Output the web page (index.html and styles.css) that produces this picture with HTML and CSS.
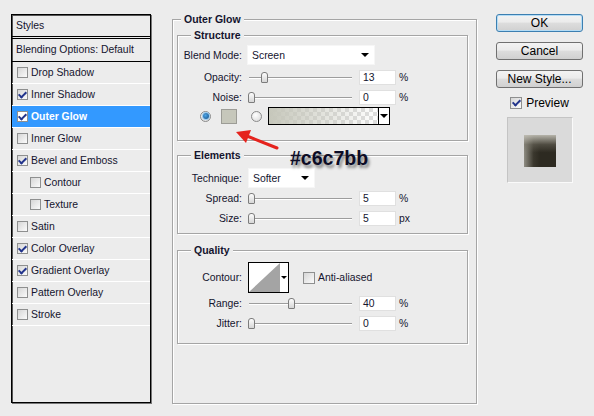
FILE: index.html
```html
<!DOCTYPE html>
<html lang="en">
  <head>
    <meta charset="UTF-8">
    <title>Layer Style - Outer Glow</title>
    <link rel="stylesheet" href="styles.css">
  </head>
  <body>
    <div class="dialog">
      <div class="styles-list">
        <div class="list-head">Styles</div>
        <div class="list-blend">Blending Options: Default</div>
        <div class="item"><span class="cb"></span>Drop Shadow</div>
        <div class="item"><span class="cb on"></span>Inner Shadow</div>
        <div class="item selected"><span class="cb on"></span>Outer Glow</div>
        <div class="item"><span class="cb"></span>Inner Glow</div>
        <div class="item"><span class="cb on"></span>Bevel and Emboss</div>
        <div class="item sub"><span class="cb"></span>Contour</div>
        <div class="item sub"><span class="cb"></span>Texture</div>
        <div class="item"><span class="cb"></span>Satin</div>
        <div class="item"><span class="cb on"></span>Color Overlay</div>
        <div class="item"><span class="cb on"></span>Gradient Overlay</div>
        <div class="item"><span class="cb"></span>Pattern Overlay</div>
        <div class="item"><span class="cb"></span>Stroke</div>
      </div>

      <div class="group outer">
        <div class="group-title">Outer Glow</div>

        <div class="group structure">
          <div class="group-title">Structure</div>
          <div class="row first"><label>Blend Mode:</label><div class="select blend-select">Screen<span class="tri"></span></div></div>
          <div class="row"><label>Opacity:</label><div class="slider"><span class="thumb" style="left:13px"></span></div><span class="num">13</span><span class="unit">%</span></div>
          <div class="row"><label>Noise:</label><div class="slider"><span class="thumb" style="left:0px"></span></div><span class="num">0</span><span class="unit">%</span></div>
          <div class="row color-row">
            <span class="radio on"></span>
            <span class="color-swatch"></span>
            <span class="radio second"></span>
            <div class="grad"><span class="grad-fill"></span><span class="grad-drop"><span class="tri"></span></span></div>
          </div>
        </div>

        <div class="group elements">
          <div class="group-title">Elements</div>
          <div class="row first"><label>Technique:</label><div class="select tech-select">Softer<span class="tri"></span></div></div>
          <div class="row"><label>Spread:</label><div class="slider"><span class="thumb" style="left:0px"></span></div><span class="num">5</span><span class="unit">%</span></div>
          <div class="row"><label>Size:</label><div class="slider"><span class="thumb" style="left:0px"></span></div><span class="num">5</span><span class="unit">px</span></div>
        </div>

        <div class="group quality">
          <div class="group-title">Quality</div>
          <div class="row first contour-row">
            <label>Contour:</label>
            <div class="contour">
              <svg width="31" height="29" viewBox="0 0 31 29"><polygon points="0,29 31,0 31,29" fill="#a4a4a4"/></svg>
              <span class="contour-drop"><span class="tri"></span></span>
            </div>
            <span class="cb aa"></span>Anti-aliased
          </div>
          <div class="row"><label>Range:</label><div class="slider"><span class="thumb" style="left:40px"></span></div><span class="num">40</span><span class="unit">%</span></div>
          <div class="row"><label>Jitter:</label><div class="slider"><span class="thumb" style="left:0px"></span></div><span class="num">0</span><span class="unit">%</span></div>
        </div>
      </div>

      <div class="actions">
        <div class="btn default">OK</div>
        <div class="btn">Cancel</div>
        <div class="btn">New Style...</div>
        <div class="preview-toggle"><span class="cb on"></span>Preview</div>
        <div class="preview-box"><div class="preview-thumb"></div></div>
      </div>
    </div>

    <!-- annotation drawn over the dialog -->
    <svg class="arrow" width="55" height="30" viewBox="0 0 55 30">
      <line x1="47" y1="23" x2="17" y2="11" stroke="#e5231d" stroke-width="3" stroke-linecap="round"/>
      <polygon points="6,7 21,5 16,18" fill="#e5231d"/>
    </svg>
    <div class="note">#c6c7bb</div>
  </body>
</html>
```

FILE: styles.css
```css
* {
  box-sizing: border-box;
}

body {
  margin: 0;
  width: 594px;
  height: 416px;
  overflow: hidden;
  position: relative;
  background: #ececec;
  font-family: 'Liberation Sans', Arial, sans-serif;
  font-size: 10.4px;
  color: #14142e;
}

.dialog {
  display: flex;
  align-items: flex-start;
  padding-left: 11px;
}

/* left style list */
.styles-list {
  width: 140px;
  height: 389px;
  margin-top: 14px;
  border: 1px solid #000;
  box-shadow: inset 1px 1px 0 #555, 1px 1px 0 #777;
  flex: none;
}

.list-head {
  height: 22px;
  line-height: 21px;
  padding-left: 4px;
  border-bottom: 1px solid #000;
  margin-bottom: 1px;
}

.list-blend {
  height: 24px;
  line-height: 22px;
  padding-left: 4px;
  border-top: 1px solid #000;
  border-bottom: 1px solid #000;
}

.item {
  display: flex;
  align-items: center;
  height: 22px;
  padding-left: 5px;
  border-bottom: 1px solid #fff;
}

.item.sub {
  padding-left: 18px;
}

.item.selected {
  background: #3399ff;
  color: #fff;
  font-weight: bold;
}

.cb {
  width: 11px;
  height: 11px;
  flex: none;
  margin-right: 3px;
  border: 1px solid #8e8f8f;
  background: linear-gradient(135deg, #d6d6d6, #fbfbfb);
  display: flex;
  align-items: center;
  justify-content: center;
}

.selected .cb {
  background: #fff;
}

.cb.on::after {
  content: "";
  width: 3px;
  height: 6px;
  border: solid #22348c;
  border-width: 0 2px 2px 0;
  transform: translateY(-1px) rotate(45deg);
}

/* etched groups */
.group {
  border: 1px solid #a5a5a5;
  box-shadow: inset 1px 1px 0 #fff, 1px 1px 0 #fff;
}

.group-title {
  width: fit-content;
  font-weight: bold;
  font-size: 10.5px;
  line-height: 14px;
  padding: 0 3px;
  margin: -8px 0 0 8px;
  background: #ececec;
}

.outer {
  width: 305px;
  height: 385px;
  margin: 19px 0 0 21px;
  flex: none;
}

.outer .group .group-title {
  margin-left: 13px;
}

.structure {
  height: 106px;
  margin: 9px 8px 0 4px;
}

.elements {
  height: 79px;
  margin: 14px 8px 0 4px;
}

.quality {
  height: 94px;
  margin: 16px 8px 0 4px;
}

.row {
  display: flex;
  align-items: center;
  height: 20px;
}

.row label {
  width: 64px;
  flex: none;
  text-align: right;
  margin-right: 5px;
}

.structure .row.first {
  margin-top: 3px;
}

.structure .row + .row {
  margin-top: 2px;
}

.structure .row + .row + .row {
  margin-top: 0;
}

.elements .row.first {
  margin-top: 6px;
}

.quality .row.first {
  margin-top: 5px;
}

.select {
  display: flex;
  align-items: center;
  justify-content: space-between;
  height: 20px;
  padding: 0 5px 0 4px;
  background: #fff;
  border: 1px solid #f6f6f6;
}

.blend-select {
  width: 128px;
}

.tech-select {
  width: 67px;
  margin-left: 1px;
}

.tri {
  width: 0;
  height: 0;
  border-left: 4px solid transparent;
  border-right: 4px solid transparent;
  border-top: 4px solid #000;
}

.slider {
  position: relative;
  width: 104px;
  height: 20px;
  margin-left: 1px;
  flex: none;
}

.slider::before {
  content: "";
  position: absolute;
  left: 1px;
  right: 0;
  top: 10px;
  height: 1px;
  background: #9d9d9d;
  box-shadow: 0 1px 0 #fff;
}

.thumb {
  position: absolute;
  top: 5px;
  width: 7px;
  height: 11px;
  border: 1px solid #7c7c7c;
  border-radius: 3px 3px 1px 1px;
  background: linear-gradient(#fdfdfd, #d6d6d6);
}

.num {
  width: 37px;
  height: 15px;
  margin-left: 7px;
  padding-left: 3px;
  line-height: 13px;
  background: #fff;
  border: 1px solid #e0e0e0;
}

.unit {
  margin-left: 3px;
}

/* colour row */
.row.color-row {
  height: 18px;
  margin-top: 6px;
  padding-left: 22px;
}

.radio {
  width: 11px;
  height: 11px;
  flex: none;
  border-radius: 50%;
  border: 1px solid #8a8a8a;
  background: radial-gradient(circle at 40% 35%, #fff, #d6d6d6);
  display: flex;
  align-items: center;
  justify-content: center;
}

.radio.on::after {
  content: "";
  width: 6px;
  height: 6px;
  border-radius: 50%;
  background: radial-gradient(circle at 40% 40%, #4fa6e6, #0b4b88);
  box-shadow: 0 0 0 1px #9ccbee;
}

.radio.second {
  margin-left: 14px;
}

.color-swatch {
  width: 16px;
  height: 15px;
  margin-left: 10px;
  background: #c6c7bb;
  border: 1px solid #9c9c96;
}

.grad {
  display: flex;
  width: 122px;
  height: 18px;
  margin-left: 6px;
  border: 1px solid #000;
}

.grad-fill {
  flex: 1;
  background:
    linear-gradient(to right, #c6c7bb, rgba(198, 199, 187, 0)),
    conic-gradient(#dedede 25%, #fff 0 50%, #dedede 0 75%, #fff 0) 0 0 / 8px 8px;
}

.grad-drop {
  width: 11px;
  display: flex;
  align-items: center;
  justify-content: center;
  background: #fff;
  border-left: 1px solid #000;
}

/* contour row */
.row.contour-row {
  height: 31px;
}

.contour {
  display: flex;
  width: 41px;
  height: 31px;
  margin-left: 1px;
  border: 1px solid #000;
  background: #fff;
}

.contour svg {
  display: block;
}

.contour-drop {
  flex: 1;
  display: flex;
  align-items: center;
  justify-content: center;
}

.contour-drop .tri {
  border-left-width: 3px;
  border-right-width: 3px;
  border-top-width: 3px;
}

.cb.aa {
  width: 12px;
  height: 12px;
  margin-left: 14px;
}

/* right column */
.actions {
  width: 87px;
  margin: 14px 0 0 19px;
  display: flex;
  flex-direction: column;
  align-items: center;
  flex: none;
}

.btn {
  width: 87px;
  height: 18px;
  margin-bottom: 10px;
  border: 1px solid #707070;
  border-radius: 3px;
  background: linear-gradient(#f3f3f3 0%, #ebebeb 45%, #dddddd 50%, #d0d0d0 100%);
  font-size: 12px;
  line-height: 16px;
  text-align: center;
  color: #000;
}

.btn.default {
  border-color: #3c7fb1;
  box-shadow: inset 0 0 0 1px #b4dcf5;
}

.btn:nth-child(3) {
  margin-bottom: 8px;
}

.preview-toggle {
  display: flex;
  align-items: center;
  height: 13px;
  font-size: 12px;
  color: #000;
}

.preview-toggle .cb {
  width: 12px;
  height: 12px;
  margin-right: 4px;
}

.preview-box {
  width: 66px;
  height: 66px;
  margin-top: 8px;
  display: flex;
  align-items: center;
  justify-content: center;
  background: #dadada;
  border: 1px solid #c4c4c4;
  border-right-color: #fafafa;
  border-bottom-color: #fafafa;
}

.preview-thumb {
  width: 32px;
  height: 32px;
  margin-top: 2px;
  background:
    linear-gradient(to bottom, rgba(196, 194, 184, 0.9) 0%, rgba(120, 116, 104, 0.45) 30%, rgba(50, 46, 36, 0) 55%),
    linear-gradient(to right, rgba(176, 174, 164, 0.75) 0%, rgba(90, 86, 74, 0.3) 30%, rgba(50, 46, 36, 0) 50%),
    #2d2a21;
}

/* annotation */
.arrow {
  position: absolute;
  left: 230px;
  top: 125px;
}

.note {
  position: absolute;
  left: 290px;
  top: 149px;
  font-size: 19.5px;
  line-height: 19px;
  font-weight: bold;
  color: #0c0c26;
  text-shadow: 2px 3px 3px rgba(0, 0, 0, 0.45);
}
```
